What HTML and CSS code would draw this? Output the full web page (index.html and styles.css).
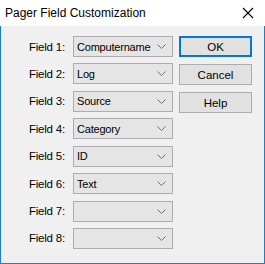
FILE: index.html
```html
<!DOCTYPE html>
<html lang="en">
<head>
    <meta charset="UTF-8">
    <title>Pager Field Customization</title>
    <link rel="stylesheet" href="styles.css">
</head>
<body>
    <div class="window">
        <header class="titlebar">
            <span class="title">Pager Field Customization</span>
            <svg class="close" width="12" height="12" viewBox="0 0 12 12">
                <path d="M1 1 L11 11 M11 1 L1 11" stroke="#000" stroke-width="1.1" fill="none"/>
            </svg>
        </header>

        <div class="body">
            <div class="fields">
                <label>Field 1:</label>
                <div class="combo"><span>Computername</span><svg class="chev" width="9" height="5" viewBox="0 0 9 5"><path d="M0.5 0.5 L4.5 4.5 L8.5 0.5" stroke="#707070" fill="none"/></svg></div>

                <label>Field 2:</label>
                <div class="combo"><span>Log</span><svg class="chev" width="9" height="5" viewBox="0 0 9 5"><path d="M0.5 0.5 L4.5 4.5 L8.5 0.5" stroke="#707070" fill="none"/></svg></div>

                <label>Field 3:</label>
                <div class="combo"><span>Source</span><svg class="chev" width="9" height="5" viewBox="0 0 9 5"><path d="M0.5 0.5 L4.5 4.5 L8.5 0.5" stroke="#707070" fill="none"/></svg></div>

                <label>Field 4:</label>
                <div class="combo"><span>Category</span><svg class="chev" width="9" height="5" viewBox="0 0 9 5"><path d="M0.5 0.5 L4.5 4.5 L8.5 0.5" stroke="#707070" fill="none"/></svg></div>

                <label>Field 5:</label>
                <div class="combo"><span>ID</span><svg class="chev" width="9" height="5" viewBox="0 0 9 5"><path d="M0.5 0.5 L4.5 4.5 L8.5 0.5" stroke="#707070" fill="none"/></svg></div>

                <label>Field 6:</label>
                <div class="combo"><span>Text</span><svg class="chev" width="9" height="5" viewBox="0 0 9 5"><path d="M0.5 0.5 L4.5 4.5 L8.5 0.5" stroke="#707070" fill="none"/></svg></div>

                <label>Field 7:</label>
                <div class="combo"><span></span><svg class="chev" width="9" height="5" viewBox="0 0 9 5"><path d="M0.5 0.5 L4.5 4.5 L8.5 0.5" stroke="#707070" fill="none"/></svg></div>

                <label>Field 8:</label>
                <div class="combo"><span></span><svg class="chev" width="9" height="5" viewBox="0 0 9 5"><path d="M0.5 0.5 L4.5 4.5 L8.5 0.5" stroke="#707070" fill="none"/></svg></div>
            </div>

            <div class="buttons">
                <button class="btn default">OK</button>
                <button class="btn">Cancel</button>
                <button class="btn">Help</button>
            </div>
        </div>
    </div>
</body>
</html>
```

FILE: styles.css
```css
body {
    margin: 0;
    padding: 0;
    font-family: 'Liberation Sans', Arial, sans-serif;
    font-size: 11.5px;
    color: #000;
}
.window {
    width: 265px;
    height: 264px;
    box-sizing: border-box;
    background-color: #f0f0f0;
    border: 1px solid #1a7fd4;
    border-top: none;
    display: flex;
    flex-direction: column;
}
.titlebar {
    height: 26px;
    background-color: #ffffff;
    display: flex;
    align-items: center;
    justify-content: space-between;
    padding: 0 11px 0 5px;
    margin: 0 -1px;
}
.title {
    font-size: 12px;
}
.body {
    display: flex;
    padding: 10px 0 0 0;
}
.fields {
    display: grid;
    grid-template-columns: 64px 100px;
    column-gap: 8px;
    row-gap: 6.43px;
    grid-auto-rows: 21px;
}
.fields label {
    display: flex;
    align-items: center;
    justify-content: flex-end;
    letter-spacing: -0.2px;
}
.combo {
    box-sizing: border-box;
    border: 1px solid #adadad;
    background-color: #e5e5e5;
    display: flex;
    align-items: center;
    justify-content: space-between;
    padding: 0 6px 0 3px;
    font-size: 11px;
    letter-spacing: -0.2px;
}
.chev {
    display: block;
}
.buttons {
    display: flex;
    flex-direction: column;
    gap: 7px;
    margin-left: 6px;
}
.btn {
    width: 73px;
    height: 21px;
    box-sizing: border-box;
    border: 1px solid #adadad;
    background-color: #e1e1e1;
    font-family: inherit;
    font-size: 11.5px;
    padding: 0;
    color: #000;
}
.btn.default {
    border: 2px solid #0078d7;
}
```
